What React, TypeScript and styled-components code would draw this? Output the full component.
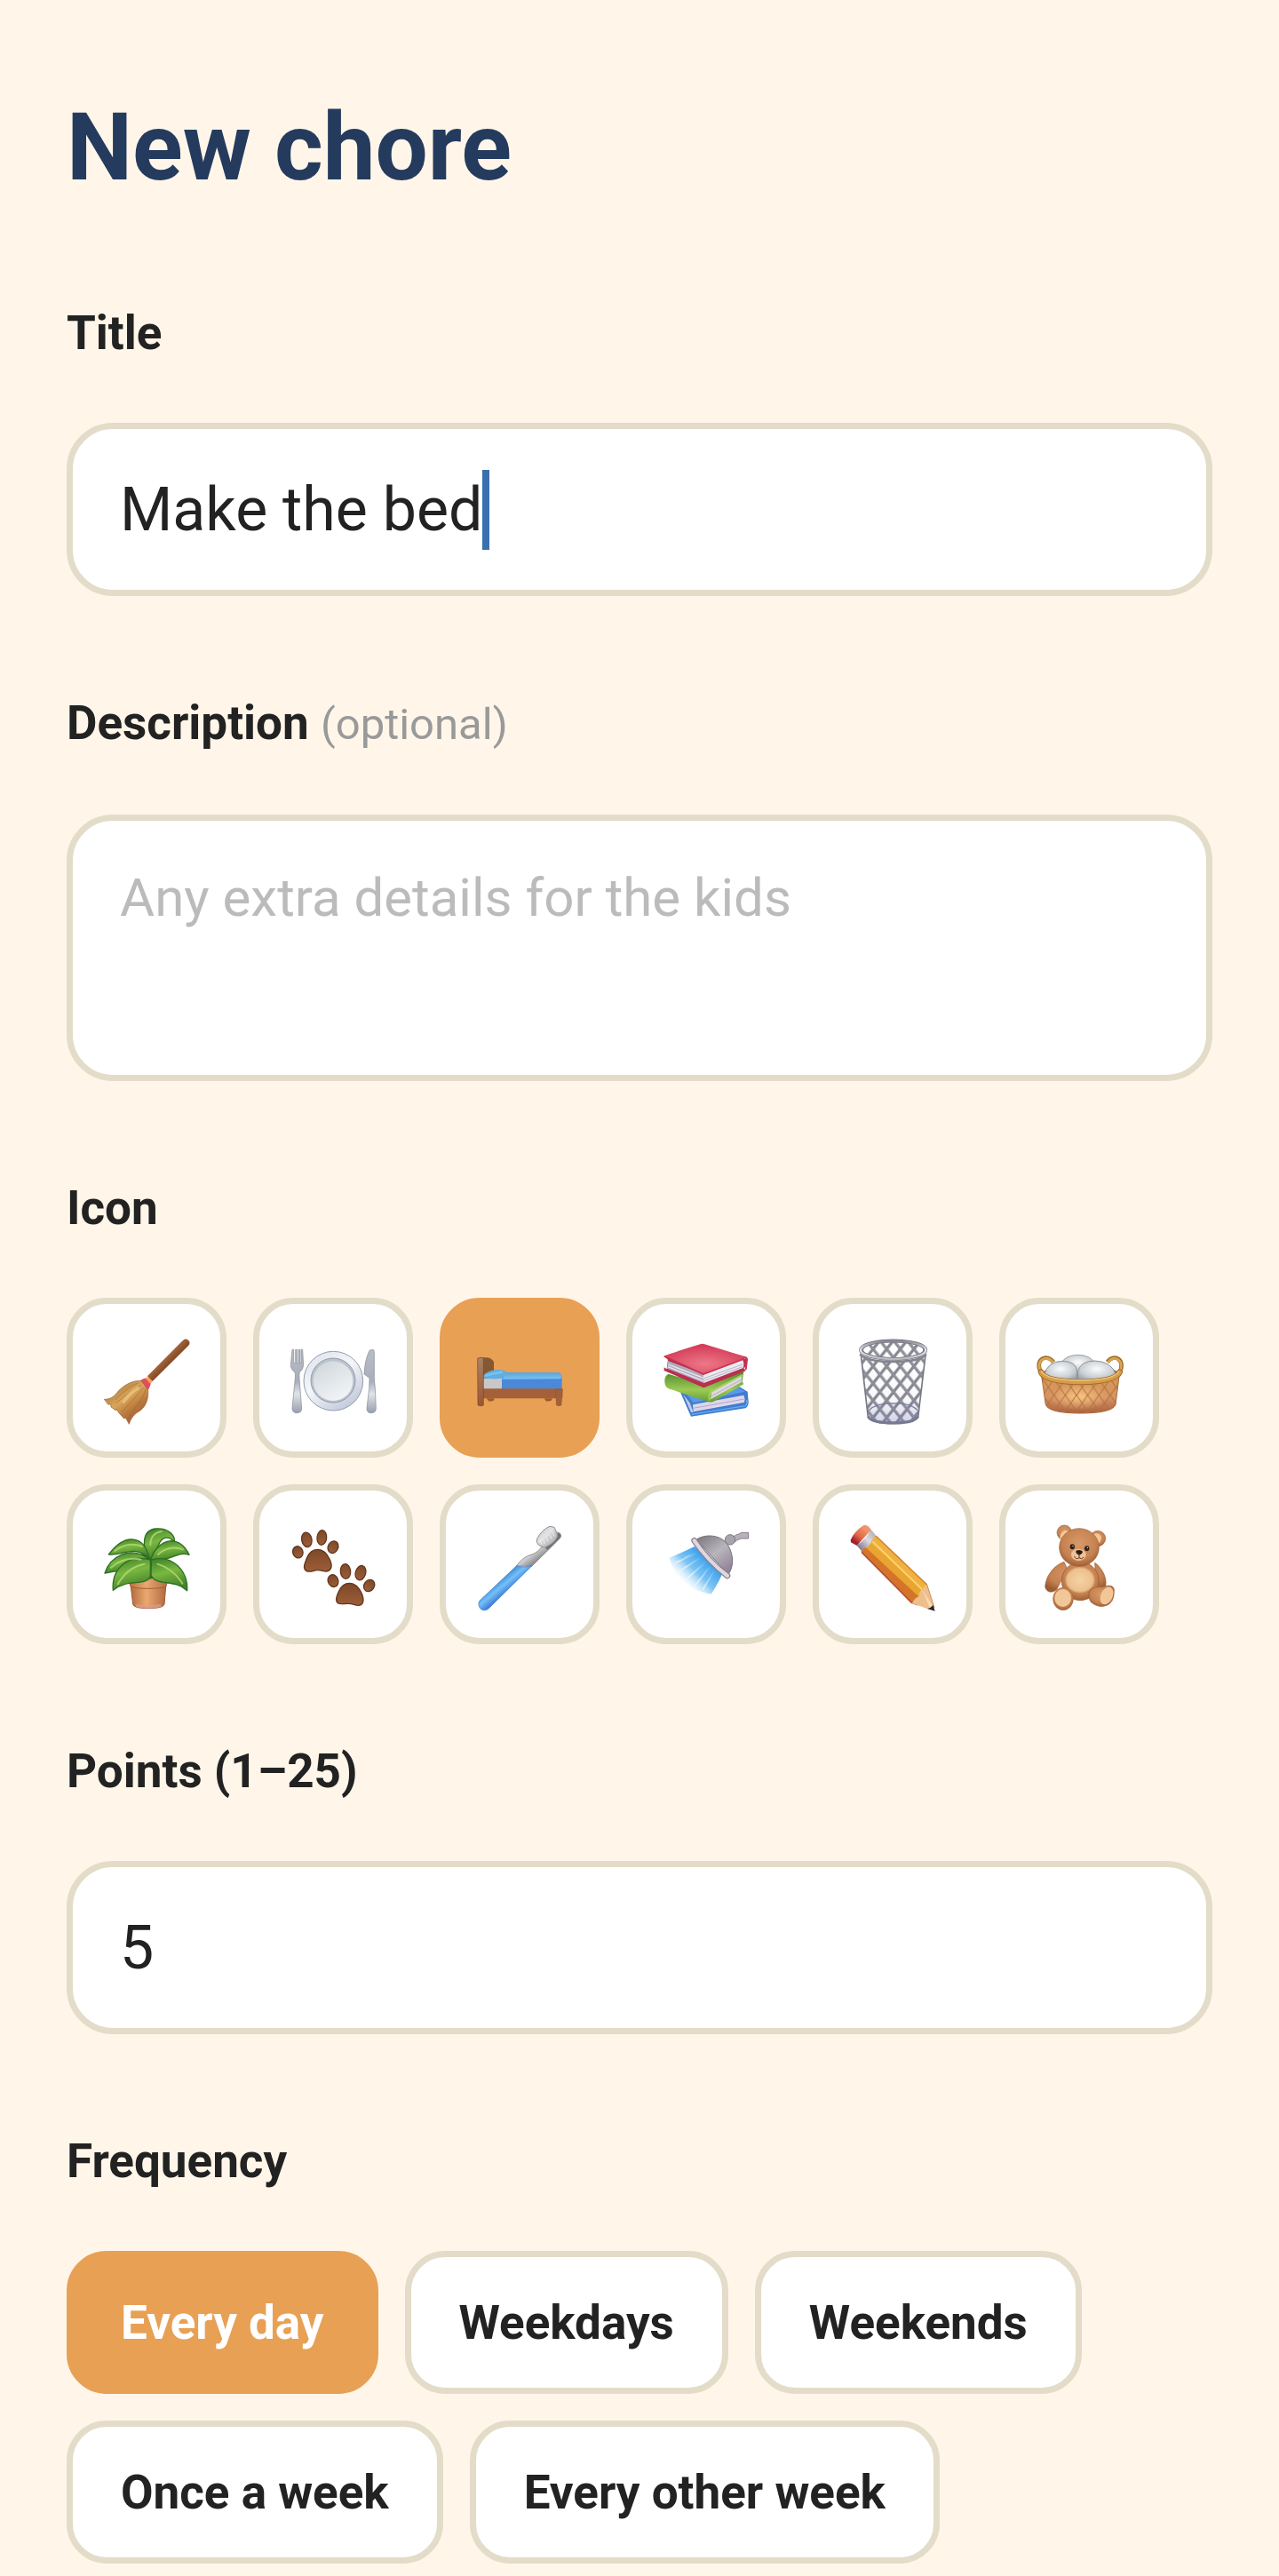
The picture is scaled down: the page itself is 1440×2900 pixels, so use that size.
import React, { useState } from 'react';
import styled, { createGlobalStyle } from 'styled-components';

const GlobalStyle = createGlobalStyle`
  * {
    box-sizing: border-box;
  }

  body {
    margin: 0;
    background: #fff6e9;
    color: #222;
    font-family: Roboto, 'Liberation Sans', sans-serif;
  }
`;

const Page = styled.main`
  padding: 102px 75px 16px;
`;

const Heading = styled.h1`
  margin: 0;
  font-size: 105px;
  line-height: 130px;
  font-weight: 700;
  color: #243b5e;
`;

const Form = styled.form`
  display: flex;
  flex-direction: column;
  gap: 112px;
  margin-top: 112px;
`;

const Field = styled.div`
  display: flex;
  flex-direction: column;
  gap: 70px;
`;

const Label = styled.label`
  font-size: 53px;
  line-height: 62px;
  font-weight: 700;
`;

const Optional = styled.span`
  font-size: 49px;
  font-weight: 400;
  color: #999;
`;

const InputBox = styled.div`
  display: flex;
  align-items: center;
  height: 195px;
  padding: 0 53px;
  background: #fff;
  border: 7px solid #e3dcc9;
  border-radius: 52px;
`;

const TextInput = styled.input<{ $hug?: boolean }>`
  ${({ $hug }) => ($hug ? 'field-sizing: content;' : 'flex: 1;')}
  min-width: 0;
  padding: 0;
  border: none;
  outline: none;
  background: transparent;
  color: #222;
  caret-color: transparent;
  font-family: inherit;
  font-size: 68px;
  line-height: 90px;
`;

const Caret = styled.span`
  width: 8px;
  height: 90px;
  background: #3a70b0;
`;

const TextArea = styled.textarea`
  display: block;
  width: 100%;
  height: 300px;
  padding: 52px 53px;
  border: 7px solid #e3dcc9;
  border-radius: 52px;
  outline: none;
  resize: none;
  background: #fff;
  color: #222;
  font-family: inherit;
  font-size: 60px;
  line-height: 70px;

  &::placeholder {
    color: #bbb;
    opacity: 1;
  }
`;

const Options = styled.div`
  display: flex;
  flex-wrap: wrap;
  gap: 30px;
`;

const Option = styled.button<{ $active: boolean }>`
  border: 7px solid ${({ $active }) => ($active ? '#e8a055' : '#e3dcc9')};
  border-radius: 45px;
  background: ${({ $active }) => ($active ? '#e8a055' : '#fff')};
  color: ${({ $active }) => ($active ? '#fff' : '#222')};
  cursor: pointer;
`;

const IconButton = styled(Option)`
  display: flex;
  align-items: center;
  justify-content: center;
  width: 180px;
  height: 180px;
  padding: 0;
`;

const Chip = styled(Option)`
  height: 161px;
  padding: 0 54px;
  font-family: inherit;
  font-size: 53px;
  line-height: 62px;
  font-weight: 700;
`;

const Glyph = styled.svg`
  display: block;
  width: 110px;
  height: 110px;
`;

const Broom = () => (
  <>
    <defs>
      <linearGradient id="broomStick" x1="0" y1="0" x2="1" y2="1">
        <stop offset="0.4" stopColor="#b06c3c" />
        <stop offset="0.6" stopColor="#78401f" />
      </linearGradient>
      <linearGradient id="broomHead" x1="0.2" y1="0.1" x2="0.8" y2="0.9">
        <stop offset="0" stopColor="#a9793f" />
        <stop offset="0.4" stopColor="#dba65c" />
        <stop offset="0.7" stopColor="#b87a3b" />
        <stop offset="1" stopColor="#a85842" />
      </linearGradient>
    </defs>
    <path d="M169 160L286 42Q294 32 303 37Q313 43 308 54L185 176Z" fill="url(#broomStick)" stroke="#7c4524" strokeWidth="2" />
    <path d="M142 178Q152 164 168 168L182 176Q176 198 170 207L160 204Z" fill="#e24d60" />
    <path d="M160 166L171 163L184 177L178 186Z" fill="#f3a458" />
    <path d="M148 176C120 172 88 190 70 210C55 230 42 238 22 238L36 256L44 254L45 264L62 276L64 270L70 282L90 304L94 300L106 322C112 302 122 288 145 275C165 258 172 235 170 206Z" fill="url(#broomHead)" stroke="#96602f" strokeWidth="2" />
    <path d="M148 190C125 200 95 225 60 252M155 198C138 218 110 250 82 280M162 205C155 235 125 265 104 302M135 184C110 192 85 215 58 240" fill="none" stroke="#8f5c2c" strokeWidth="3" opacity="0.45" />
    <path d="M135 200C115 212 100 228 88 246" fill="none" stroke="#f2cd88" strokeWidth="12" strokeLinecap="round" opacity="0.6" />
  </>
);

const Plate = () => (
  <>
    <defs>
      <linearGradient id="plateRim" x1="0" y1="0" x2="0.7" y2="1">
        <stop offset="0" stopColor="#dce1ea" />
        <stop offset="0.5" stopColor="#f4f6fa" />
        <stop offset="1" stopColor="#c3c9da" />
      </linearGradient>
      <linearGradient id="plateWell" x1="0.2" y1="0" x2="0.8" y2="1">
        <stop offset="0" stopColor="#d0d8dd" />
        <stop offset="1" stopColor="#f4f6f8" />
      </linearGradient>
      <linearGradient id="cutlery" x1="0" y1="0" x2="0" y2="1">
        <stop offset="0" stopColor="#b9bdc6" />
        <stop offset="0.5" stopColor="#a8aebb" />
        <stop offset="0.7" stopColor="#e0e3e8" />
        <stop offset="1" stopColor="#979eae" />
      </linearGradient>
    </defs>
    <circle cx="166" cy="176" r="100" fill="url(#plateRim)" stroke="#959caf" strokeWidth="3" />
    <circle cx="165" cy="174" r="75" fill="#bac3cc" stroke="#939dac" strokeWidth="3" />
    <circle cx="165" cy="176" r="67" fill="url(#plateWell)" />
    <path d="M27 70H32V116H38V70H43V116H48V70H53V116H57V70H62L65 122Q64 138 52 146Q50 154 51 166L59 268Q59 284 43 284Q27 284 27 268L37 166Q38 154 36 146Q22 138 22 122Z" fill="url(#cutlery)" stroke="#838995" strokeWidth="2" />
    <path d="M288 73Q292 70 302 71L304 78V160Q304 175 307 200L310 268Q310 284 294 284Q278 284 279 268L287 200L288 166L270 153Q272 105 288 73Z" fill="url(#cutlery)" stroke="#838995" strokeWidth="2" />
  </>
);

const Bed = () => (
  <>
    <defs>
      <linearGradient id="bedWood" x1="0" y1="0" x2="0" y2="1">
        <stop offset="0" stopColor="#a88363" />
        <stop offset="1" stopColor="#9c5632" />
      </linearGradient>
      <linearGradient id="bedTop" x1="0" y1="0" x2="0" y2="1">
        <stop offset="0" stopColor="#5ba4dc" />
        <stop offset="1" stopColor="#78c2f4" />
      </linearGradient>
    </defs>
    <path d="M30 97H56Q68 98 78 111V170H40Z" fill="#855832" />
    <path d="M53 235H79V241Q72 246 60 244ZM248 235H274V241Q266 246 254 244Z" fill="#a35828" />
    <path d="M41 167H108V204H41Z" fill="#c8c7ca" />
    <path d="M105 168L112 148H292Q307 148 308 166V204H105Z" fill="#4c88d8" />
    <path d="M106 170L120 147H292Q306 148 308 166L300 169Z" fill="url(#bedTop)" />
    <path d="M41 159Q54 142 85 138Q113 136 122 147Q114 162 101 167Q65 172 43 164Z" fill="#60aee2" />
    <path d="M48 158Q73 150 107 146" fill="none" stroke="#82c9f2" strokeWidth="8" opacity="0.7" />
    <path d="M41 202H310V232Q305 237 289 235H41Z" fill="#a36039" />
    <path d="M23 100Q32 94 43 99V258Q34 263 24 258Z" fill="url(#bedWood)" stroke="#78492d" strokeWidth="2" />
    <path d="M287 205H310L306 258Q297 262 289 258Z" fill="#a2613b" stroke="#824622" strokeWidth="1" />
  </>
);

const Books = () => (
  <>
    <defs>
      <radialGradient id="bookRed" cx="0.5" cy="0.65" r="0.6">
        <stop offset="0" stopColor="#ec7888" />
        <stop offset="1" stopColor="#d43c58" />
      </radialGradient>
      <linearGradient id="bookGreen" x1="0" y1="0" x2="0" y2="1">
        <stop offset="0" stopColor="#4f8a2c" />
        <stop offset="0.6" stopColor="#9cca54" />
        <stop offset="1" stopColor="#659c35" />
      </linearGradient>
    </defs>
    <path d="M78 214L114 296L298 268Q309 262 308 246L305 212L278 196L150 210Z" fill="#3f7cd0" />
    <path d="M96 216L122 250L296 212L272 198Z" fill="#5a9ae4" />
    <path d="M88 222L110 250L122 282L114 282Z" fill="#c3cbe8" />
    <path d="M120 256L292 224Q298 236 294 248L122 280Z" fill="#e0d6ea" />
    <path d="M121 268L294 237" stroke="#a9abce" strokeWidth="3" />
    <path d="M116 289L298 260Q305 254 302 240" fill="none" stroke="#66aef2" strokeWidth="4" />
    <path d="M38 152Q24 158 25 178Q25 196 38 202L172 246Q182 250 194 244L292 187L287 177L292 144L158 190Z" fill="url(#bookGreen)" />
    <path d="M184 214L286 158L284 180L180 238Z" fill="#ddd8e0" />
    <path d="M176 242Q172 220 184 210L288 155" fill="none" stroke="#a4d35a" strokeWidth="5" />
    <path d="M182 228L285 171" stroke="#b8adb9" strokeWidth="3" />
    <path d="M23 93L36 104L32 136L23 130V141L157 199L299 142L292 133Q304 128 303 99L155 145Z" fill="#b92f50" />
    <path d="M36 108L155 152L157 183L33 134Z" fill="#b0abba" />
    <path d="M37 120L156 166M36 128L156 176" stroke="#e8e6ef" strokeWidth="4" />
    <path d="M155 155L288 104Q295 116 290 132L157 183Z" fill="#eceaf0" />
    <path d="M156 168L288 120M157 176L288 128" stroke="#b7b4c2" strokeWidth="3" />
    <path d="M23 92Q30 87 145 52Q152 49 160 52L298 94L294 101L155 154Z" fill="url(#bookRed)" />
    <path d="M23 92L155 153L294 101" fill="none" stroke="#c93350" strokeWidth="5" />
    <path d="M292 98Q302 94 303 104L299 138" fill="none" stroke="#c93350" strokeWidth="6" />
  </>
);

const Wastebasket = () => (
  <>
    <defs>
      <pattern id="mesh" width="46" height="58" patternUnits="userSpaceOnUse" x="7" y="10">
        <path d="M-5 -6L51 64M51 -6L-5 64" stroke="#85868f" strokeWidth="10" />
        <path d="M-5 -8L51 62" stroke="#b0b0b8" strokeWidth="2" />
      </pattern>
      <linearGradient id="binTint" x1="0" y1="0" x2="0" y2="1">
        <stop offset="0" stopColor="#80818c" stopOpacity="0" />
        <stop offset="0.65" stopColor="#7478a8" stopOpacity="0.05" />
        <stop offset="1" stopColor="#7478b8" stopOpacity="0.35" />
      </linearGradient>
      <linearGradient id="binRim" x1="0" y1="0" x2="0" y2="1">
        <stop offset="0" stopColor="#85868f" />
        <stop offset="0.5" stopColor="#e8e8ec" />
        <stop offset="1" stopColor="#b8b8c0" />
      </linearGradient>
    </defs>
    <ellipse cx="167" cy="71" rx="104" ry="28" fill="url(#mesh)" stroke="#76778a" strokeWidth="6" />
    <path d="M58 88Q90 110 167 110Q246 110 276 88L251 298Q240 320 167 320Q94 320 82 298Z" fill="url(#mesh)" stroke="#777985" strokeWidth="5" />
    <path d="M58 88Q90 110 167 110Q246 110 276 88L251 298Q240 320 167 320Q94 320 82 298Z" fill="url(#binTint)" />
    <path d="M85 275Q110 250 167 252Q228 250 249 275" fill="none" stroke="#7a7da0" strokeWidth="4" />
    <path d="M82 296Q94 317 167 317Q240 317 251 296" fill="none" stroke="#777993" strokeWidth="9" />
    <path d="M54 86Q75 112 167 112Q260 112 279 86" fill="none" stroke="#858690" strokeWidth="6" />
    <ellipse cx="167" cy="71" rx="110" ry="31" fill="none" stroke="#777883" strokeWidth="11" />
    <ellipse cx="167" cy="71" rx="110" ry="31" fill="none" stroke="url(#binRim)" strokeWidth="7" />
  </>
);

const LaundryBasket = () => (
  <>
    <defs>
      <radialGradient id="linen" cx="0.5" cy="0.4" r="0.7">
        <stop offset="0" stopColor="#fafbfc" />
        <stop offset="0.6" stopColor="#cad0d4" />
        <stop offset="1" stopColor="#8f999f" />
      </radialGradient>
      <linearGradient id="wicker" x1="0" y1="0" x2="0" y2="1">
        <stop offset="0" stopColor="#d39a55" />
        <stop offset="0.6" stopColor="#d79361" />
        <stop offset="1" stopColor="#ad6140" />
      </linearGradient>
      <radialGradient id="wickerGlow">
        <stop offset="0" stopColor="#ffd08a" stopOpacity="0.8" />
        <stop offset="1" stopColor="#ffd08a" stopOpacity="0" />
      </radialGradient>
      <pattern id="weave" width="38" height="54" patternUnits="userSpaceOnUse" x="4" y="8">
        <path d="M-4 -6L42 60M42 -6L-4 60" stroke="#b0703f" strokeWidth="3" />
      </pattern>
    </defs>
    <path d="M38 150C10 105 55 80 78 112M300 150C325 105 284 80 260 112" fill="none" stroke="#a06f29" strokeWidth="14" />
    <path d="M38 150C12 107 55 84 76 112M300 150C323 107 284 84 262 112" fill="none" stroke="#d9a656" strokeWidth="8" />
    <ellipse cx="169" cy="154" rx="130" ry="32" fill="#956025" />
    <path d="M103 118Q118 88 162 88Q202 88 220 118L160 150Z" fill="url(#linen)" stroke="#9da5aa" strokeWidth="3" />
    <path d="M46 158Q58 109 108 109Q158 110 158 145V175H60Z" fill="url(#linen)" stroke="#8c969e" strokeWidth="3" />
    <path d="M160 175V146Q168 108 219 108Q275 110 290 156Q270 175 220 176Z" fill="url(#linen)" stroke="#8c969e" strokeWidth="3" />
    <path d="M37 152Q58 184 169 186Q282 184 301 152L288 256Q276 285 169 285Q63 285 52 256Z" fill="url(#wicker)" stroke="#a56b35" strokeWidth="3" />
    <ellipse cx="165" cy="230" rx="100" ry="45" fill="url(#wickerGlow)" />
    <path d="M37 160Q58 186 169 190Q282 186 301 160L288 256Q276 285 169 285Q63 285 52 256Z" fill="url(#weave)" />
    <path d="M36 146Q48 178 169 180Q290 178 302 146" fill="none" stroke="#a26b28" strokeWidth="20" strokeLinecap="round" />
    <path d="M36 146Q48 178 169 180Q290 178 302 146" fill="none" stroke="#d79c4a" strokeWidth="14" strokeLinecap="round" />
    <path d="M38 143Q52 172 169 174Q286 172 300 143" fill="none" stroke="#f2c87d" strokeWidth="4" />
  </>
);

const Plant = () => (
  <>
    <defs>
      <linearGradient id="leaf" x1="0" y1="0" x2="0.3" y2="1">
        <stop offset="0" stopColor="#3c7c28" />
        <stop offset="0.5" stopColor="#79b840" />
        <stop offset="1" stopColor="#448329" />
      </linearGradient>
      <linearGradient id="pot" x1="0" y1="0" x2="1" y2="0">
        <stop offset="0" stopColor="#b36d3d" />
        <stop offset="0.45" stopColor="#eba870" />
        <stop offset="1" stopColor="#b06c42" />
      </linearGradient>
    </defs>
    <path d="M112 240H230L225 300Q222 314 171 314Q122 314 119 300Z" fill="url(#pot)" stroke="#9c5935" strokeWidth="3" />
    <path d="M103 215Q120 208 171 208Q224 208 237 217L231 240Q215 247 171 247Q126 247 111 240Z" fill="url(#pot)" stroke="#a35e35" strokeWidth="3" />
    <path d="M130 304Q171 315 214 304" stroke="#e09a95" strokeWidth="10" fill="none" opacity="0.7" />
    <path d="M150 120Q180 110 210 125L206 205Q170 225 135 205Z" fill="#2f6d26" />
    <g fill="url(#leaf)" stroke="#2f6e25" strokeWidth="4" strokeLinejoin="round">
      <path d="M172 142C150 108 148 48 198 45C236 42 262 66 259 90C238 64 214 76 206 100C196 125 184 130 180 146Z" />
      <path d="M172 136C156 76 98 52 37 132C86 138 118 96 174 145Z" />
      <path d="M170 146C110 100 42 140 24 195C68 184 98 190 172 154Z" />
      <path d="M180 148C200 85 270 55 309 133C270 120 246 156 182 152Z" />
      <path d="M178 150C98 128 46 184 52 253C98 212 160 240 178 208Z" />
      <path d="M181 150C254 130 306 190 302 254C262 214 196 240 180 202Z" />
    </g>
    <g fill="none" stroke="#b4da74" strokeWidth="6" strokeLinecap="round" opacity="0.8">
      <path d="M178 100Q178 60 216 54" />
      <path d="M58 120Q100 86 150 105" />
      <path d="M45 176Q90 138 146 149" />
      <path d="M204 132Q240 98 288 115" />
      <path d="M68 232Q100 175 158 164" />
      <path d="M202 164Q255 180 286 230" />
    </g>
  </>
);

const Paws = () => (
  <>
    <defs>
      <linearGradient id="paw" x1="0" y1="0" x2="0" y2="1">
        <stop offset="0" stopColor="#7e4928" />
        <stop offset="1" stopColor="#9c5d38" />
      </linearGradient>
    </defs>
    <g fill="url(#paw)" stroke="#63361d" strokeWidth="4">
      <ellipse cx="46" cy="124" rx="17" ry="20" transform="rotate(-20 46 124)" />
      <ellipse cx="76" cy="82" rx="17" ry="25" transform="rotate(-12 76 82)" />
      <ellipse cx="127" cy="75" rx="16" ry="25" transform="rotate(5 127 75)" />
      <ellipse cx="165" cy="107" rx="17" ry="21" transform="rotate(25 165 107)" />
      <path d="M113 115C135 115 146 132 154 149C164 171 160 186 142 189C130 189 124 184 110 185C96 187 86 194 74 187C62 179 69 163 76 145C84 125 95 115 113 115Z" />
      <ellipse cx="165" cy="221" rx="17" ry="21" transform="rotate(-20 165 221)" />
      <ellipse cx="207" cy="189" rx="17" ry="25" transform="rotate(-4 207 189)" />
      <ellipse cx="258" cy="194" rx="17" ry="25" transform="rotate(15 258 194)" />
      <ellipse cx="287" cy="237" rx="17" ry="21" transform="rotate(35 287 237)" />
      <path d="M221 229C242 229 254 247 262 264C270 284 269 301 252 304C240 305 232 298 218 298C202 297 192 302 182 297C171 287 177 273 184 257C192 238 204 229 221 229Z" />
    </g>
  </>
);

const Toothbrush = () => (
  <>
    <defs>
      <linearGradient id="brushHandle" x1="0.35" y1="0.35" x2="0.6" y2="0.6">
        <stop offset="0" stopColor="#3f8fd8" />
        <stop offset="0.4" stopColor="#74c0f8" />
        <stop offset="1" stopColor="#2f66d0" />
      </linearGradient>
      <linearGradient id="brushNeck" x1="0.3" y1="0.3" x2="0.7" y2="0.7">
        <stop offset="0.3" stopColor="#f0eff0" />
        <stop offset="1" stopColor="#77767b" />
      </linearGradient>
      <linearGradient id="bristles" x1="0" y1="0" x2="1" y2="1">
        <stop offset="0" stopColor="#b8b8bb" />
        <stop offset="0.4" stopColor="#e2e2e4" />
        <stop offset="1" stopColor="#9c9ca2" />
      </linearGradient>
    </defs>
    <path d="M154 171Q178 138 207 132Q226 126 246 99L293 57Q305 58 305 70Q304 77 292 87L206 172Z" fill="url(#brushNeck)" stroke="#909095" strokeWidth="3" />
    <path d="M154 171Q180 178 206 171L63 312Q50 326 35 317Q21 304 30 288Z" fill="url(#brushHandle)" stroke="#357cca" strokeWidth="2" />
    <path d="M292 59Q304 58 304 70Q302 77 288 89L260 116L252 110L294 72Z" fill="#707075" />
    <path d="M224 79Q240 48 267 37L282 40Q288 48 293 69Q286 94 250 108Q242 108 229 100Q220 91 224 79Z" fill="url(#bristles)" stroke="#8f8f93" strokeWidth="3" />
    <path d="M230 89Q258 75 278 46M240 97L236 87M250 96L246 84M262 89L257 76M274 80L268 66M282 71L276 56" fill="none" stroke="#fafafa" strokeWidth="2" />
  </>
);

const Shower = () => (
  <>
    <defs>
      <linearGradient id="spray" gradientUnits="userSpaceOnUse" x1="172" y1="150" x2="92" y2="230">
        <stop offset="0" stopColor="#3aa0ea" />
        <stop offset="0.5" stopColor="#62b8f2" stopOpacity="0.85" />
        <stop offset="1" stopColor="#a8d8f8" stopOpacity="0" />
      </linearGradient>
      <linearGradient id="streak" gradientUnits="userSpaceOnUse" x1="165" y1="155" x2="95" y2="230">
        <stop offset="0" stopColor="#fff" stopOpacity="0" />
        <stop offset="0.6" stopColor="#fff" stopOpacity="0.6" />
        <stop offset="1" stopColor="#fff" stopOpacity="0.2" />
      </linearGradient>
      <linearGradient id="showerHead" x1="0" y1="0" x2="0.7" y2="1">
        <stop offset="0" stopColor="#77757b" />
        <stop offset="0.55" stopColor="#b8b5bd" />
        <stop offset="1" stopColor="#95859b" />
      </linearGradient>
    </defs>
    <path d="M126 105L220 196Q206 230 182 266Q130 258 84 226Q54 190 40 144Q82 126 126 105Z" fill="url(#spray)" />
    <g stroke="url(#streak)" strokeWidth="5" strokeLinecap="round">
      <path d="M130 128L62 160M144 144L72 190M160 160L96 218M176 176L122 244M192 188L154 250M122 130L94 142M168 184L152 208" />
    </g>
    <path d="M244 88Q252 69 278 62L284 58H308V78H284Q270 80 254 96Z" fill="#b8b0bb" stroke="#847a87" strokeWidth="3" />
    <circle cx="246" cy="82" r="17" fill="#aaa5ad" stroke="#7c7780" strokeWidth="3" />
    <path d="M132 82C158 62 218 62 241 104C262 145 254 180 240 199Z" fill="url(#showerHead)" stroke="#747078" strokeWidth="3" />
    <path d="M125 85Q170 152 237 204" fill="none" stroke="#89808b" strokeWidth="20" strokeLinecap="round" />
    <path d="M125 85Q170 152 237 204" fill="none" stroke="#ded6e0" strokeWidth="13" strokeLinecap="round" />
  </>
);

const Pencil = () => (
  <>
    <defs>
      <linearGradient id="eraser" x1="0.7" y1="0.2" x2="0.2" y2="0.8">
        <stop offset="0" stopColor="#f0936c" />
        <stop offset="0.6" stopColor="#df6544" />
        <stop offset="1" stopColor="#a01f31" />
      </linearGradient>
      <linearGradient id="ferrule" x1="1" y1="0" x2="0" y2="1">
        <stop offset="0" stopColor="#a7a2a6" />
        <stop offset="0.45" stopColor="#dddbe2" />
        <stop offset="1" stopColor="#635875" />
      </linearGradient>
    </defs>
    <path d="M23 83Q35 55 66 34Q76 30 85 39L93 49L44 102L24 91Z" fill="url(#eraser)" />
    <path d="M92 48L108 67Q100 93 61 121L43 101Q73 84 92 48Z" fill="url(#ferrule)" />
    <path d="M106 68L281 234L287 257L250 302L229 295L58 121Q92 102 106 68Z" fill="#e9a531" />
    <path d="M58 121L74 108L256 277L250 302L229 295Z" fill="#d47428" />
    <path d="M60 124L228 294L250 302" fill="none" stroke="#b64c31" strokeWidth="5" />
    <path d="M91 93L106 68L281 234L266 249Z" fill="#efb140" />
    <path d="M97 88L272 257" stroke="#fbd26e" strokeWidth="6" />
    <path d="M108 69L281 234" stroke="#cb7d27" strokeWidth="4" />
    <path d="M281 234Q270 238 266 249Q252 260 254 273Q237 281 231 297L288 317L306 312Z" fill="#eebf8c" />
    <path d="M281 234L306 312" stroke="#c98d55" strokeWidth="3" />
    <path d="M266 252L300 305L290 313Z" fill="#fbdcae" />
    <path d="M301 302L308 323L282 315Q294 313 301 302Z" fill="#25232d" />
  </>
);

const Teddy = () => (
  <>
    <defs>
      <radialGradient id="fur" cx="0.5" cy="0.4" r="0.62">
        <stop offset="0" stopColor="#d99a68" />
        <stop offset="0.7" stopColor="#c58151" />
        <stop offset="1" stopColor="#9b5b33" />
      </radialGradient>
      <radialGradient id="belly">
        <stop offset="0" stopColor="#f6d3a5" />
        <stop offset="0.85" stopColor="#ecc08c" />
        <stop offset="1" stopColor="#d59c68" />
      </radialGradient>
    </defs>
    <g fill="url(#fur)" stroke="#a96a40" strokeWidth="2">
      <circle cx="115" cy="58" r="25" />
      <circle cx="228" cy="78" r="26" />
    </g>
    <path d="M101 82Q97 60 115 51Q130 49 133 58ZM213 64Q229 56 239 70Q242 88 228 96Z" fill="#f3c794" />
    <path d="M114 157C75 170 52 210 50 240C53 260 74 265 90 249L125 180ZM218 160C246 180 260 215 254 239Q242 250 222 238Z" fill="url(#fur)" stroke="#9f5f37" strokeWidth="2" />
    <ellipse cx="169" cy="222" rx="63" ry="65" fill="url(#fur)" stroke="#97572f" strokeWidth="2" />
    <ellipse cx="168" cy="218" rx="50" ry="44" fill="url(#belly)" />
    <ellipse cx="165" cy="108" rx="67" ry="64" fill="url(#fur)" stroke="#9f6038" strokeWidth="2" />
    <ellipse cx="163" cy="133" rx="25" ry="20" fill="#efc296" />
    <ellipse cx="142" cy="106" rx="8" ry="9" fill="#30211c" />
    <ellipse cx="191" cy="112" rx="8" ry="9" fill="#30211c" />
    <circle cx="144" cy="103" r="2" fill="#fff" />
    <circle cx="193" cy="109" r="2" fill="#fff" />
    <path d="M154 120Q164 114 176 121Q179 129 165 134Q153 129 154 120Z" fill="#281d1b" />
    <path d="M165 132V143M149 139Q154 151 165 143Q174 151 180 142" fill="none" stroke="#653b24" strokeWidth="3" strokeLinecap="round" />
    <path d="M198 258Q205 240 242 242Q278 230 283 249Q286 300 248 307Q226 310 205 293Q195 280 198 258Z" fill="url(#fur)" stroke="#9b5a32" strokeWidth="2" />
    <ellipse cx="258" cy="271" rx="20" ry="31" transform="rotate(25 258 271)" fill="#f1c798" />
    <ellipse cx="111" cy="282" rx="34" ry="38" fill="url(#fur)" stroke="#aa6a40" strokeWidth="2" />
    <ellipse cx="110" cy="279" rx="28" ry="30" fill="#f1c798" />
  </>
);

const ICONS = [
  { name: 'Broom', Drawing: Broom },
  { name: 'Plate', Drawing: Plate },
  { name: 'Bed', Drawing: Bed },
  { name: 'Books', Drawing: Books },
  { name: 'Wastebasket', Drawing: Wastebasket },
  { name: 'Laundry basket', Drawing: LaundryBasket },
  { name: 'Plant', Drawing: Plant },
  { name: 'Paws', Drawing: Paws },
  { name: 'Toothbrush', Drawing: Toothbrush },
  { name: 'Shower', Drawing: Shower },
  { name: 'Pencil', Drawing: Pencil },
  { name: 'Teddy bear', Drawing: Teddy },
];

const FREQUENCIES = ['Every day', 'Weekdays', 'Weekends', 'Once a week', 'Every other week'];

const App: React.FC = () => {
  const [title, setTitle] = useState('Make the bed');
  const [description, setDescription] = useState('');
  const [icon, setIcon] = useState('Bed');
  const [points, setPoints] = useState('5');
  const [frequency, setFrequency] = useState('Every day');

  return (
    <Page>
      <GlobalStyle />
      <Heading>New chore</Heading>
      <Form onSubmit={(e) => e.preventDefault()}>
        <Field>
          <Label htmlFor="title">Title</Label>
          <InputBox>
            <TextInput
              $hug
              id="title"
              type="text"
              value={title}
              onChange={(e) => setTitle(e.target.value)}
            />
            <Caret />
          </InputBox>
        </Field>

        <Field>
          <Label htmlFor="description">
            Description <Optional>(optional)</Optional>
          </Label>
          <TextArea
            id="description"
            placeholder="Any extra details for the kids"
            value={description}
            onChange={(e) => setDescription(e.target.value)}
          />
        </Field>

        <Field>
          <Label as="span" id="icon-label">Icon</Label>
          <Options role="group" aria-labelledby="icon-label">
            {ICONS.map(({ name, Drawing }) => (
              <IconButton
                key={name}
                type="button"
                aria-label={name}
                aria-pressed={icon === name}
                $active={icon === name}
                onClick={() => setIcon(name)}
              >
                <Glyph viewBox="0 0 330 330" aria-hidden="true">
                  <Drawing />
                </Glyph>
              </IconButton>
            ))}
          </Options>
        </Field>

        <Field>
          <Label htmlFor="points">Points (1–25)</Label>
          <InputBox>
            <TextInput
              id="points"
              type="text"
              inputMode="numeric"
              value={points}
              onChange={(e) => setPoints(e.target.value)}
            />
          </InputBox>
        </Field>

        <Field>
          <Label as="span" id="frequency-label">Frequency</Label>
          <Options role="group" aria-labelledby="frequency-label">
            {FREQUENCIES.map((option) => (
              <Chip
                key={option}
                type="button"
                aria-pressed={frequency === option}
                $active={frequency === option}
                onClick={() => setFrequency(option)}
              >
                {option}
              </Chip>
            ))}
          </Options>
        </Field>
      </Form>
    </Page>
  );
};

export default App;
